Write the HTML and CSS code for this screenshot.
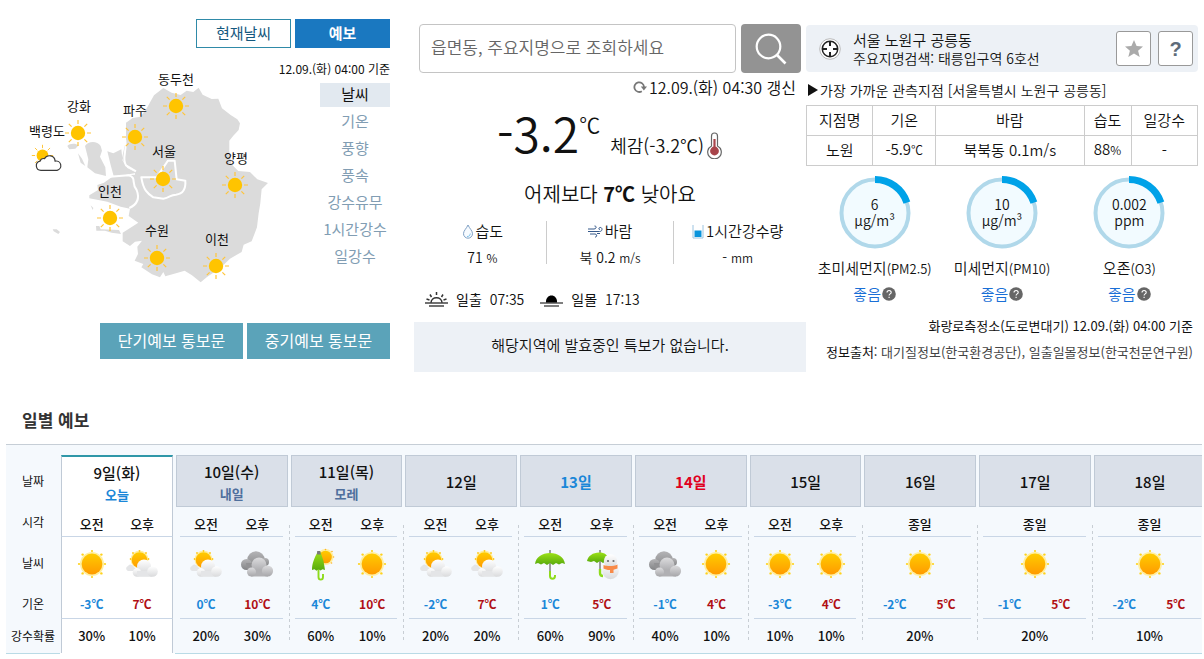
FILE: index.html
```html
<!DOCTYPE html>
<html lang="ko">
<head>
<meta charset="utf-8">
<meta name="viewport" content="width=device-width, initial-scale=1">
<title>날씨 예보</title>
<link rel="stylesheet" href="styles.css">
</head>
<body>
<svg class="defs" aria-hidden="true">
  <defs>
    <linearGradient id="gSun" x1="0" y1="0" x2="0" y2="1"><stop offset="0" stop-color="#ffcc00"/><stop offset="1" stop-color="#ff9a00"/></linearGradient>
    <linearGradient id="gWhite" x1="0" y1="0" x2="0" y2="1"><stop offset="0" stop-color="#ffffff"/><stop offset="1" stop-color="#d9dadc"/></linearGradient>
    <linearGradient id="gDark" x1="0" y1="0" x2="0" y2="1"><stop offset="0" stop-color="#b4b4b6"/><stop offset="1" stop-color="#838486"/></linearGradient>
    <linearGradient id="gMid" x1="0" y1="0" x2="0" y2="1"><stop offset="0" stop-color="#dcdcde"/><stop offset="1" stop-color="#a6a6a9"/></linearGradient>
    <linearGradient id="gGreen" x1="0" y1="0" x2="0" y2="1"><stop offset="0" stop-color="#9be016"/><stop offset="1" stop-color="#56a90c"/></linearGradient>
    <symbol id="pinSun" viewBox="-14 -14 28 28">
      <circle r="7.2" fill="#ffc400"/>
      <path d="M0-9v-4M0 9v4M-9 0h-4M9 0h4M-6.4-6.4l-2.8-2.8M6.4-6.4l2.8-2.8M-6.4 6.4l-2.8 2.8M6.4 6.4l2.8 2.8" stroke="#ffc53a" stroke-width="1.2"/>
    </symbol>
    <symbol id="sun" viewBox="0 0 34 34">
      <circle cx="17" cy="17" r="12" fill="#ffefa0"/>
      <g fill="#ffd21a"><circle cx="17" cy="4" r="1.1"/><circle cx="17" cy="30" r="1.1"/><circle cx="4" cy="17" r="1.1"/><circle cx="30" cy="17" r="1.1"/><circle cx="7.6" cy="7.6" r="1.2"/><circle cx="26.4" cy="7.6" r="1.2"/><circle cx="7.6" cy="26.4" r="1.2"/><circle cx="26.4" cy="26.4" r="1.2"/></g>
      <circle cx="17" cy="17" r="10.4" fill="url(#gSun)"/>
    </symbol>
    <symbol id="partly" viewBox="0 0 34 34">
      <circle cx="14.5" cy="12.5" r="9" fill="#ffefa0"/>
      <g fill="#ffc91a"><circle cx="14.5" cy="4" r=".9"/><circle cx="8" cy="6" r=".9"/><circle cx="21" cy="6" r=".9"/><circle cx="5.6" cy="12" r=".9"/><circle cx="23.5" cy="12" r=".9"/></g>
      <circle cx="14.5" cy="13" r="7.8" fill="url(#gSun)"/>
      <path d="M3 24a2.6 2.6 0 0 1 0-5 3.4 3.4 0 0 1 6 1l4 4z" fill="#e4e5e7"/>
      <circle cx="19" cy="19.500" r="7" fill="url(#gWhite)"/>
      <circle cx="12" cy="25.500" r="4.300" fill="url(#gWhite)"/>
      <path d="M12 24h15v5.800H12z" fill="#e4e5e7"/>
      <circle cx="27.500" cy="24.500" r="5.300" fill="url(#gWhite)"/>
    </symbol>
    <symbol id="cloudy" viewBox="0 0 34 34">
      <circle cx="16" cy="13" r="8.700" fill="url(#gDark)"/>
      <circle cx="6.500" cy="17.500" r="5.500" fill="url(#gDark)"/>
      <circle cx="25" cy="15" r="4" fill="url(#gDark)"/>
      <path d="M6 16h16v7H7z" fill="#929294"/>
      <circle cx="19" cy="18" r="7.500" fill="url(#gMid)"/>
      <path d="M11 23h17v6.500H11z" fill="#b0b0b3"/>
      <circle cx="11.500" cy="25" r="4.500" fill="url(#gMid)"/>
      <circle cx="27.500" cy="24" r="5.600" fill="url(#gMid)"/>
    </symbol>
    <symbol id="rain" viewBox="0 0 34 34">
      <path d="M17 3v21" stroke="#858585" stroke-width="1.600"/>
      <path d="M17 24v5c0 3.600 5 3.600 5 0v-1" fill="none" stroke="#8edb1b" stroke-width="2"/>
      <path d="M2 17C3 10 9 6 17 6s14 4 15 11l-3-1-3 1.500-3-1.500-3 2-3-2-3 2-3-2-3 1.500L5 16z" fill="url(#gGreen)"/>
    </symbol>
    <symbol id="rainSun" viewBox="0 0 34 34">
      <circle cx="21.500" cy="10" r="8" fill="#ffefa0"/>
      <g fill="#ffb52a"><circle cx="21.500" cy="2.500" r=".8"/><circle cx="28" cy="4.500" r=".8"/><circle cx="29.500" cy="10" r=".8"/><circle cx="27.500" cy="16" r=".8"/><circle cx="15.500" cy="5" r=".8"/></g>
      <circle cx="21.500" cy="10" r="6.300" fill="url(#gSun)"/>
      <path d="M14.500 22v8c0 3.500 4.500 3.500 4.500 0v-3" fill="none" stroke="#8edb1b" stroke-width="1.900"/>
      <path d="M13.500 5h3l3 9 1.500 9-2.500-.8-2 1.300-2-1.300-2 1.500-2-1.500L8 23c0-7 2.500-12 5.500-18z" fill="url(#gGreen)"/>
      <path d="M13.200 4h3l.6 3.500h-3.800z" fill="#7b7b7b"/>
    </symbol>
    <symbol id="rainSnow" viewBox="0 0 34 34">
      <path d="M15 3v21" stroke="#858585" stroke-width="1.600"/>
      <path d="M15 22v4c0 2 1 3 3 3" fill="none" stroke="#8edb1b" stroke-width="2.400"/>
      <path d="M2 14C3 9 8 5.500 14 5.500S23 8 24 13l-3 1-3 2-3-2-3 2-3-2-3 1z" fill="url(#gGreen)"/>
      <circle cx="25.500" cy="24" r="8.300" fill="url(#gWhite)"/>
      <circle cx="25.500" cy="14" r="6.700" fill="url(#gWhite)"/>
      <circle cx="23" cy="14" r="1.100" fill="#6b6b6b"/><circle cx="28.500" cy="14" r="1.100" fill="#6b6b6b"/>
      <path d="M18.500 18c4 1.500 10 1.500 14-.5v4l-4 1.200V26h-3.500v-3c-3 0-5-.7-6.500-1.500z" fill="#f88a48"/>
    </symbol>
    <symbol id="question" viewBox="0 0 14 14">
      <circle cx="7" cy="7" r="6.800" fill="#666"/>
      <path d="M5 5.600C5 2.900 9.200 2.900 9.200 5.400 9.200 6.900 7.100 6.900 7.100 8.500M7.100 9.700v1.300" fill="none" stroke="#fff" stroke-width="1.100"/>
    </symbol>
  </defs>
</svg>

<main>
  <div class="overview">
    <section class="region" aria-label="지역 날씨">
      <div class="tabs">
        <button type="button" class="tab">현재날씨</button>
        <button type="button" class="tab tab-on">예보</button>
      </div>
      <div class="region-body">
        <svg class="map" viewBox="8 56 268 240" role="img" aria-label="수도권 날씨 지도">
          <g transform="translate(20 90) scale(.3333)" fill="#dbdbdb">
            <path d="M318 98L338 84 362 80 382 52 402 16 430-6 455 8 482 15 500 2 520 6 536-7 548 14 575 27 595 26 606 55 632 75 652 88 660 100 656 120 640 137 628 152 628 182 634 222 655 243 690 246 712 268 744 279 725 298 721 340 716 370 711 412 695 454 671 464 665 486 630 506 600 535 562 560 542 577 516 556 494 542 468 550 436 559 430 546 420 562 396 553 364 532 370 522 344 512 354 492 352 470 366 452 345 455 330 468 308 454 308 428 355 398 326 378 330 356 302 350 262 335 208 325 208 316 234 300 232 285 252 278 280 258 345 254 345 245 318 228 306 205 318 150z"/>
            <path d="M262 184L280 190 304 178 308 212 322 234 350 248 282 262 272 225zM195 168C205 152 232 152 242 168L246 182 240 200 256 232 258 258 225 250 202 232 205 208zM142 168C148 160 166 158 176 166L166 176 148 178zM174 190L186 206 196 228 182 218zM98 418l12 0 10 8-5 6-14-8zM228 408h10l4 10 55 2 6 12-28-4-20-6-26 0zM212 346l8 8-2 6z"/>
            <path d="M316 150C322 190 304 200 318 226L348 244M270 260L325 256C352 262 332 280 350 300 360 326 350 344 328 354M364 262L410 262 444 212 464 212 470 268 496 272C498 300 488 312 468 314 450 314 450 324 430 326L400 322C382 310 370 300 364 262z" fill="none" stroke="#fff" stroke-width="6" stroke-linejoin="round"/>
          </g>
          <g>
            <use href="#pinSun" x="162" y="92" width="28" height="28"/>
            <use href="#pinSun" x="64" y="119" width="28" height="28"/>
            <use href="#pinSun" x="121" y="123" width="28" height="28"/>
            <use href="#pinSun" x="149" y="165" width="28" height="28"/>
            <use href="#pinSun" x="221" y="171" width="28" height="28"/>
            <use href="#pinSun" x="96" y="204" width="28" height="28"/>
            <use href="#pinSun" x="143" y="244" width="28" height="28"/>
            <use href="#pinSun" x="202" y="252" width="28" height="28"/>
            <use href="#pinSun" x="31" y="144" width="23" height="23"/>
            <path d="M41 170.300a4.600 4.600 0 0 1-1-9.100 4 4 0 0 1 4.500-2.600 5.700 5.700 0 0 1 10.600 2.500 4.700 4.700 0 0 1 2 9.200z" fill="#fff" stroke="#3a3a3a" stroke-width="1.200"/>
          </g>
          <g class="map-label">
            <text x="176" y="84">동두천</text>
            <text x="79" y="111">강화</text>
            <text x="135" y="115">파주</text>
            <text x="47" y="136">백령도</text>
            <text x="164" y="156">서울</text>
            <text x="236" y="163">양평</text>
            <text x="110" y="196">인천</text>
            <text x="157" y="235">수원</text>
            <text x="217" y="244">이천</text>
          </g>
        </svg>
        <div class="side">
          <p class="stamp">12.09.(화) 04:00 기준</p>
          <ul class="elements">
            <li><button type="button" class="element element-on">날씨</button></li>
            <li><button type="button" class="element">기온</button></li>
            <li><button type="button" class="element">풍향</button></li>
            <li><button type="button" class="element">풍속</button></li>
            <li><button type="button" class="element">강수유무</button></li>
            <li><button type="button" class="element">1시간강수</button></li>
            <li><button type="button" class="element">일강수</button></li>
          </ul>
        </div>
      </div>
      <div class="reports">
        <a class="report" href="#">단기예보 통보문</a>
        <a class="report" href="#">중기예보 통보문</a>
      </div>
    </section>

    <section class="current" aria-label="현재 날씨">
      <form class="search">
        <input class="search-box" type="text" aria-label="지역 검색" placeholder="읍면동, 주요지명으로 조회하세요">
        <button class="search-go" type="submit" aria-label="검색">
          <svg width="32" height="32" viewBox="0 0 32 32"><circle cx="13.500" cy="13.500" r="11.800" fill="none" stroke="#fff" stroke-width="2.200"/><path d="M22 22l8.500 8.500" stroke="#fff" stroke-width="2.600"/></svg>
        </button>
      </form>
      <p class="updated">
        <svg width="14" height="14" viewBox="0 0 14 14" aria-hidden="true"><path d="M8.800 11.200A4.800 4.800 0 1 1 11 7" fill="none" stroke="#777" stroke-width="1.800"/><path d="M7.800 6.500H14l-3.100 4z" fill="#777"/></svg>
        <span>12.09.(화) 04:30 갱신</span>
      </p>
      <div class="temp">
        <span class="temp-now">-3.2</span><span class="temp-unit">℃</span>
        <span class="temp-feel">체감(-3.2℃)</span>
        <svg class="thermo" width="17" height="27" viewBox="0 0 17 27" aria-hidden="true"><path d="M5.500 14V4a3 3 0 0 1 6 0v10a6.800 6.800 0 1 1-6 0z" fill="#fff" stroke="#666" stroke-width="1.200"/><circle cx="8.500" cy="19" r="4.400" fill="#a8444a"/><path d="M8.500 7v12" stroke="#a8444a" stroke-width="2.200"/></svg>
      </div>
      <p class="compare">어제보다 <strong>7℃</strong> 낮아요</p>
      <dl class="facts">
        <div class="fact">
          <dt><svg width="12" height="15" viewBox="0 0 12 15" aria-hidden="true"><path d="M6 1C4.500 4.500 1.500 6.700 1.500 9.700a4.500 4.500 0 0 0 9 0C10.500 6.700 7.500 4.500 6 1z" fill="#f7fbff" stroke="#7fa0c4"/><path d="M5 12.500c2 .2 3-1 3.300-3" fill="none" stroke="#7fc3ea"/></svg> 습도</dt>
          <dd>71 <small>%</small></dd>
        </div>
        <div class="fact">
          <dt><svg width="15" height="13" viewBox="0 0 15 13" aria-hidden="true"><path d="M0 4h6c3 0 2.500-3.500.5-3M0 6.500h11.500c3.500 0 3-4.500.5-4-1.500.3-1.500 2-.2 2.200M2 9h5c2.500 0 2 3.500 0 3M9 8.500h3" fill="none" stroke="#35588a"/></svg>바람</dt>
          <dd>북 0.2 <small>m/s</small></dd>
        </div>
        <div class="fact">
          <dt><svg width="12" height="15" viewBox="0 0 12 15" aria-hidden="true"><path d="M1 1v13h10V1" fill="none" stroke="#9cc4e0"/><path d="M2.500 6.500h7V13h-7z" fill="#0a94dc"/></svg>1시간강수량</dt>
          <dd>- <small>mm</small></dd>
        </div>
      </dl>
      <div class="sunline">
        <svg width="23" height="16" viewBox="0 0 23 16" aria-hidden="true"><path d="M6 12c0-7 11-7 11 0M11.500 1v3M5 3.500l1.500 2.500M18 3.500L16.500 6M1.500 8l3 1M21.500 8l-3 1" fill="none" stroke="#333" stroke-width="1.500"/><path d="M0 12h23M4 15h15" stroke="#444" stroke-width="1.500"/></svg>
        <span>일출</span><time>07:35</time>
        <svg class="set" width="23" height="16" viewBox="0 0 23 16" aria-hidden="true"><path d="M6 12c-1-10 12-10 11 0z" fill="#000"/><path d="M0 12h23M4 15h15" stroke="#555" stroke-width="1.500"/></svg>
        <span>일몰</span><time>17:13</time>
      </div>
      <p class="alert">해당지역에 발효중인 특보가 없습니다.</p>
    </section>

    <section class="station" aria-label="관측 지점">
      <div class="place">
        <svg width="22" height="22" viewBox="0 0 22 22" aria-hidden="true"><circle cx="11" cy="11" r="10.300" fill="#fff" stroke="#bbb"/><circle cx="11" cy="11" r="7.700" fill="none" stroke="#222" stroke-width="1.500"/><path d="M11 3v5M11 14v5M3 11h5M14 11h5" stroke="#222" stroke-width="2"/></svg>
        <div class="place-text">
          <p class="place-name">서울 노원구 공릉동</p>
          <p class="place-sub">주요지명검색: 태릉입구역 6호선</p>
        </div>
        <button type="button" class="square" aria-label="즐겨찾기"><svg width="20" height="20" viewBox="0 0 20 20"><path d="M10 1l2.600 6 6.400.5-4.900 4.200L15.700 18 10 14.600 4.300 18l1.600-6.300L1 7.500 7.400 7z" fill="#aaa"/></svg></button>
        <button type="button" class="square">?</button>
      </div>
      <h2 class="near"><svg width="12" height="12" viewBox="0 0 12 12" aria-hidden="true"><path d="M1 0l10 6-10 6z" fill="#111"/></svg>가장 가까운 관측지점 [서울특별시 노원구 공릉동]</h2>
      <table class="obs">
        <colgroup><col class="c-name"><col class="c-temp"><col class="c-wind"><col class="c-hum"><col class="c-rain"></colgroup>
        <thead><tr><th>지점명</th><th>기온</th><th>바람</th><th>습도</th><th>일강수</th></tr></thead>
        <tbody><tr><td>노원</td><td>-5.9<small>℃</small></td><td>북북동 0.1m/s</td><td>88<small>%</small></td><td>-</td></tr></tbody>
      </table>
      <div class="air">
        <div class="gauge">
          <div class="ring">
            <svg viewBox="0 0 74 74" aria-hidden="true"><circle cx="37" cy="37" r="33.500" fill="#f2fbff" stroke="#b0d8ea" stroke-width="4"/><path d="M37 3.500A33.500 33.500 0 0 1 68.900 26.600" fill="none" stroke="#00a2e8" stroke-width="7"/></svg>
            <span class="ring-text">6<br>μg/m³</span>
          </div>
          <p class="gauge-name">초미세먼지<small>(PM2.5)</small></p>
          <p class="grade">좋음<svg width="14" height="14"><use href="#question"/></svg></p>
        </div>
        <div class="gauge">
          <div class="ring">
            <svg viewBox="0 0 74 74" aria-hidden="true"><circle cx="37" cy="37" r="33.500" fill="#f2fbff" stroke="#b0d8ea" stroke-width="4"/><path d="M37 3.500A33.500 33.500 0 0 1 68.900 26.600" fill="none" stroke="#00a2e8" stroke-width="7"/></svg>
            <span class="ring-text">10<br>μg/m³</span>
          </div>
          <p class="gauge-name">미세먼지<small>(PM10)</small></p>
          <p class="grade">좋음<svg width="14" height="14"><use href="#question"/></svg></p>
        </div>
        <div class="gauge">
          <div class="ring">
            <svg viewBox="0 0 74 74" aria-hidden="true"><circle cx="37" cy="37" r="33.500" fill="#f2fbff" stroke="#b0d8ea" stroke-width="4"/><path d="M37 3.500A33.500 33.500 0 0 1 68.900 26.600" fill="none" stroke="#00a2e8" stroke-width="7"/></svg>
            <span class="ring-text">0.002<br>ppm</span>
          </div>
          <p class="gauge-name">오존<small>(O3)</small></p>
          <p class="grade">좋음<svg width="14" height="14"><use href="#question"/></svg></p>
        </div>
      </div>
      <p class="source">화랑로측정소(도로변대기) 12.09.(화) 04:00 기준</p>
      <p class="source">정보출처: <span>대기질정보(한국환경공단), 일출일몰정보(한국천문연구원)</span></p>
    </section>
  </div>

  <section class="daily">
    <h2 class="daily-title">일별 예보</h2>
    <div class="panel">
      <table class="days">
        <colgroup><col class="c-label"><col span="20"></colgroup>
        <tr class="r-date">
          <th scope="row">날짜</th>
          <th colspan="2" class="today"><div class="date"><b>9일(화)</b><span>오늘</span></div></th>
          <th colspan="2"><div class="date"><b>10일(수)</b><span>내일</span></div></th>
          <th colspan="2"><div class="date"><b>11일(목)</b><span>모레</span></div></th>
          <th colspan="2"><div class="date"><b>12일</b></div></th>
          <th colspan="2"><div class="date sat"><b>13일</b></div></th>
          <th colspan="2"><div class="date hol"><b>14일</b></div></th>
          <th colspan="2"><div class="date"><b>15일</b></div></th>
          <th colspan="2"><div class="date"><b>16일</b></div></th>
          <th colspan="2"><div class="date"><b>17일</b></div></th>
          <th colspan="2"><div class="date"><b>18일</b></div></th>
        </tr>
        <tr class="r-time">
          <th scope="row">시각</th>
          <td class="am today"><div>오전</div></td><td class="pm today"><div>오후</div></td>
          <td class="am"><div>오전</div></td><td class="pm"><div>오후</div></td>
          <td class="am"><div>오전</div></td><td class="pm"><div>오후</div></td>
          <td class="am"><div>오전</div></td><td class="pm"><div>오후</div></td>
          <td class="am"><div>오전</div></td><td class="pm"><div>오후</div></td>
          <td class="am"><div>오전</div></td><td class="pm"><div>오후</div></td>
          <td class="am"><div>오전</div></td><td class="pm"><div>오후</div></td>
          <td class="all" colspan="2"><div>종일</div></td>
          <td class="all" colspan="2"><div>종일</div></td>
          <td class="all" colspan="2"><div>종일</div></td>
        </tr>
        <tr class="r-sky">
          <th scope="row">날씨</th>
          <td class="am today"><div><svg role="img" aria-label="맑음"><use href="#sun"/></svg></div></td><td class="pm today"><div><svg role="img" aria-label="구름많음"><use href="#partly"/></svg></div></td>
          <td class="am"><div><svg role="img" aria-label="구름많음"><use href="#partly"/></svg></div></td><td class="pm"><div><svg role="img" aria-label="흐림"><use href="#cloudy"/></svg></div></td>
          <td class="am"><div><svg role="img" aria-label="비 후 갬"><use href="#rainSun"/></svg></div></td><td class="pm"><div><svg role="img" aria-label="맑음"><use href="#sun"/></svg></div></td>
          <td class="am"><div><svg role="img" aria-label="구름많음"><use href="#partly"/></svg></div></td><td class="pm"><div><svg role="img" aria-label="구름많음"><use href="#partly"/></svg></div></td>
          <td class="am"><div><svg role="img" aria-label="비"><use href="#rain"/></svg></div></td><td class="pm"><div><svg role="img" aria-label="비 또는 눈"><use href="#rainSnow"/></svg></div></td>
          <td class="am"><div><svg role="img" aria-label="흐림"><use href="#cloudy"/></svg></div></td><td class="pm"><div><svg role="img" aria-label="맑음"><use href="#sun"/></svg></div></td>
          <td class="am"><div><svg role="img" aria-label="맑음"><use href="#sun"/></svg></div></td><td class="pm"><div><svg role="img" aria-label="맑음"><use href="#sun"/></svg></div></td>
          <td class="all" colspan="2"><div><svg role="img" aria-label="맑음"><use href="#sun"/></svg></div></td>
          <td class="all" colspan="2"><div><svg role="img" aria-label="맑음"><use href="#sun"/></svg></div></td>
          <td class="all" colspan="2"><div><svg role="img" aria-label="맑음"><use href="#sun"/></svg></div></td>
        </tr>
        <tr class="r-temp">
          <th scope="row">기온</th>
          <td class="am today"><div>-3℃</div></td><td class="pm today"><div>7℃</div></td>
          <td class="am"><div>0℃</div></td><td class="pm"><div>10℃</div></td>
          <td class="am"><div>4℃</div></td><td class="pm"><div>10℃</div></td>
          <td class="am"><div>-2℃</div></td><td class="pm"><div>7℃</div></td>
          <td class="am"><div>1℃</div></td><td class="pm"><div>5℃</div></td>
          <td class="am"><div>-1℃</div></td><td class="pm"><div>4℃</div></td>
          <td class="am"><div>-3℃</div></td><td class="pm"><div>4℃</div></td>
          <td class="am"><div>-2℃</div></td><td class="pm"><div>5℃</div></td>
          <td class="am"><div>-1℃</div></td><td class="pm"><div>5℃</div></td>
          <td class="am"><div>-2℃</div></td><td class="pm"><div>5℃</div></td>
        </tr>
        <tr class="r-rain">
          <th scope="row">강수확률</th>
          <td class="am today"><div>30%</div></td><td class="pm today"><div>10%</div></td>
          <td class="am"><div>20%</div></td><td class="pm"><div>30%</div></td>
          <td class="am"><div>60%</div></td><td class="pm"><div>10%</div></td>
          <td class="am"><div>20%</div></td><td class="pm"><div>20%</div></td>
          <td class="am"><div>60%</div></td><td class="pm"><div>90%</div></td>
          <td class="am"><div>40%</div></td><td class="pm"><div>10%</div></td>
          <td class="am"><div>10%</div></td><td class="pm"><div>10%</div></td>
          <td class="all" colspan="2"><div>20%</div></td>
          <td class="all" colspan="2"><div>20%</div></td>
          <td class="all" colspan="2"><div>10%</div></td>
        </tr>
      </table>
    </div>
  </section>
</main>
</body>
</html>
```
FILE: styles.css
```css
* { box-sizing: border-box; }
body {
  margin: 0;
  background: #fff;
  color: #111;
  font-family: "Noto Sans CJK KR", "Noto Sans", sans-serif;
  font-size: 15px;
  line-height: 20px;
}
p, h2, ul, dl, dd { margin: 0; padding: 0; }
ul { list-style: none; }
button, input { font: inherit; color: inherit; }
button { padding: 0; cursor: pointer; }
svg { flex: none; }
.defs { position: absolute; width: 0; height: 0; }

.overview {
  display: grid;
  grid-template-columns: 414fr 392fr 398fr;
}

/* region map */
.region { padding: 19px 24px 0 8px; }
.tabs, .reports { display: flex; justify-content: flex-end; gap: 4px; }
.tab {
  width: 95px;
  height: 29px;
  padding-bottom: 2px;
  border: 1px solid #2f8aa8;
  background: #fff;
  color: #14587e;
}
.tab-on { border-color: #1a78c0; background: #1a78c0; color: #fff; font-weight: 700; }
.region-body {
  display: flex;
  justify-content: space-between;
  padding-top: 8px;
}
.map { width: 268px; height: 240px; }
.map-label { font-size: 13px; text-anchor: middle; fill: #111; }
.side {
  display: flex;
  flex-direction: column;
  align-items: flex-end;
  width: 114px;
  padding-top: 3px;
}
.stamp { font-size: 12px; white-space: nowrap; }
.elements { width: 70px; padding-top: 4px; }
.element {
  display: block;
  width: 100%;
  height: 24px;
  margin-bottom: 3px;
  padding-bottom: 2px;
  border: 0;
  background: none;
  color: #819db3;
  line-height: 20px;
  white-space: nowrap;
}
.element-on { background: #e2e9f0; color: #111; }
.reports { padding-top: 27px; }
.report {
  flex: 0 0 143px;
  background: #5ba3b9;
  color: #fff;
  font-size: 16px;
  line-height: 34px;
  padding-bottom: 2px;
  text-align: center;
  text-decoration: none;
}

/* current weather */
.current { display: flex; flex-direction: column; padding-top: 24px; }
.search { display: flex; gap: 5px; padding: 0 5px; }
.search-box {
  flex: 1;
  min-width: 0;
  height: 49px;
  padding: 0 11px 4px;
  border: 1px solid #c4c4c4;
  border-radius: 4px;
  font-size: 17px;
  font-weight: 350;
}
.search-box::placeholder { color: #666; opacity: 1; }
.search-go {
  display: grid;
  place-items: center;
  width: 60px;
  border: 0;
  border-radius: 4px;
  background: #939393;
}
.updated {
  display: flex;
  align-items: center;
  justify-content: flex-end;
  gap: 2px;
  padding: 4px 10px 0 0;
  font-size: 16px;
  font-weight: 350;
}
.temp {
  display: flex;
  justify-content: center;
  align-items: flex-end;
  height: 62px;
}
.temp-now { font-size: 48px; line-height: 54px; font-weight: 350; }
.temp-unit { align-self: flex-start; margin-top: 17px; font-size: 21px; line-height: 20px; font-weight: 350; }
.temp-feel { padding: 0 2px 0 10px; font-size: 18px; line-height: 28px; font-weight: 350; }
.compare { padding-top: 22px; font-size: 20px; line-height: 26px; text-align: center; font-weight: 350; }
.facts { display: flex; padding: 14px 5px 0; text-align: center; }
.fact { flex: 1; height: 43px; border-left: 1px solid #ccc; }
.fact:first-child { border-left: 0; }
.fact dt { display: flex; align-items: center; justify-content: center; gap: 2px; font-weight: 350; }
.fact dd { padding-top: 6px; font-size: 14px; font-weight: 350; }
.fact small { font-size: 12px; }
.sunline { display: flex; align-items: center; gap: 8px; padding: 25px 11px 0; font-size: 14px; }
.sunline time { font-weight: 350; }
.sunline .set { margin-left: 8px; }
.alert {
  margin-top: 13px;
  background: #edf1f6;
  line-height: 46px;
  padding-bottom: 4px;
  text-align: center;
  font-weight: 350;
}

/* station and air quality */
.station { padding: 25px 6px 0 0; }
.place {
  display: flex;
  align-items: center;
  gap: 7px;
  height: 47px;
  padding: 0 5px 0 13px;
  border-radius: 4px;
  background: #edf1f6;
}
.place-text { flex: 1; padding-left: 5px; line-height: 19px; font-weight: 350; }
.place-sub { font-size: 14px; }
.square {
  display: grid;
  place-items: center;
  width: 35px;
  height: 35px;
  border: 1px solid #999;
  border-radius: 3px;
  background: #fff;
  color: #5e6c7a;
  font-family: "Liberation Sans", sans-serif;
  font-size: 20px;
  font-weight: 700;
}
.near {
  display: flex;
  align-items: center;
  gap: 1px;
  padding: 8px 0 5px 1px;
  font-size: 14px;
  font-weight: 350;
  white-space: nowrap;
}
.obs { width: 100%; border-collapse: collapse; table-layout: fixed; }
.obs th, .obs td {
  height: 30px;
  padding: 0 0 2px;
  border: 1px solid #ccc;
  text-align: center;
  font-weight: 350;
}
.obs small { font-size: 12px; }
.c-name, .c-rain { width: 17%; }
.c-temp { width: 16%; }
.c-wind { width: 38%; }
.c-hum { width: 12%; }
.air { display: grid; grid-template-columns: repeat(3, 1fr); padding: 10px 5px 0; text-align: center; }
.ring { display: grid; width: 74px; height: 74px; margin: 0 auto; }
.ring svg, .ring-text { grid-area: 1 / 1; }
.ring-text { z-index: 1; align-self: center; font-size: 14px; line-height: 16px; font-weight: 350; padding-bottom: 2px; }
.gauge-name { padding-top: 8px; white-space: nowrap; font-weight: 350; }
.gauge-name small { font-size: 13px; }
.grade {
  display: flex;
  align-items: center;
  justify-content: center;
  gap: 1px;
  padding-top: 5px;
  color: #1a6fd6;
  font-weight: 350;
}
.source { padding: 12px 5px 0 0; font-size: 13px; line-height: 20px; text-align: right; white-space: nowrap; }
.source + .source { padding-top: 6px; }
.source span { color: #444; }

/* daily forecast */
.daily { padding: 36px 2px 0 6px; }
.daily-title { padding-left: 16px; color: #333; font-size: 17px; line-height: 24px; }
.panel {
  margin-top: 12px;
  padding-top: 10px;
  overflow: hidden;
  border-top: 1px solid #c6ced6;
  background: #f5f9fd;
}
.days {
  width: calc(100% + 6px);
  border-collapse: separate;
  border-spacing: 0;
  table-layout: fixed;
  font-size: 13px;
  text-align: center;
}
.c-label { width: 54px; }
.days th, .days td { padding: 0; }
.days th[scope] { font-size: 12px; font-weight: 400; white-space: nowrap; }
.days td { font-weight: 500; }
.date {
  display: flex;
  flex-direction: column;
  align-items: center;
  justify-content: center;
  height: 52px;
  margin: 0 2px 0 1px;
  padding-top: 1px;
  border: 1px solid #c0cad6;
  background: #dae0e9;
  font-size: 13px;
}
.date b { font-size: 15px; line-height: 24px; font-weight: 500; }
.date span { color: #4f6f9d; line-height: 20px; font-weight: 700; }
.sat { color: #1b87d8; }
.hol { color: #e0001e; }
.today .date { border-top: 2px solid #2f97a8; border-bottom: 0; background: #fff; }
.today .date span { color: #1b87d8; }
.sat b, .hol b { font-weight: 700; }
.days td > div { display: flex; align-items: center; justify-content: center; }
.am > div { margin-left: 5px; }
.pm > div { margin-right: 7px; }
.all > div { margin: 0 7px 0 5px; }
td.pm, td.all {
  background: repeating-linear-gradient(#c8ced4 0 3px, transparent 3px 6px) right top / 1px 100% no-repeat;
}
.r-time td.pm, .r-time td.all { background-position: right bottom; background-size: 1px 12px; }
.r-rain td.pm, .r-rain td.all { background-size: 1px 23px; }
td.am.today { background: linear-gradient(#fff, #fff) right / calc(100% - 1px) 100% no-repeat; }
td.pm.today { background: linear-gradient(#fff, #fff) left top / calc(100% - 2px) 100% no-repeat; }
td.am.today > div { margin-left: 1px; padding-left: 4px; border-left: 1px solid #c0cad6; }
td.pm.today > div { margin-right: 2px; padding-right: 5px; border-right: 1px solid #c0cad6; }
.r-time td > div { height: 30px; padding-top: 4px; border-bottom: 1px solid #c9d6e6; }
.r-sky td > div { height: 52px; padding-top: 2px; }
.r-sky svg { width: 34px; height: 34px; }
.r-temp td > div { height: 30px; border-bottom: 1px solid #c9d6e6; font-size: 12px; }
.r-rain td > div { height: 34px; }
.r-temp .am { color: #1b87d8; font-weight: 700; }
.r-temp .pm { color: #b00f14; font-weight: 700; }
.r-rain th, .r-rain td { border-bottom: 1px solid #b9dbe6; }
.r-rain td.today { border-bottom-color: #fff; }
```
